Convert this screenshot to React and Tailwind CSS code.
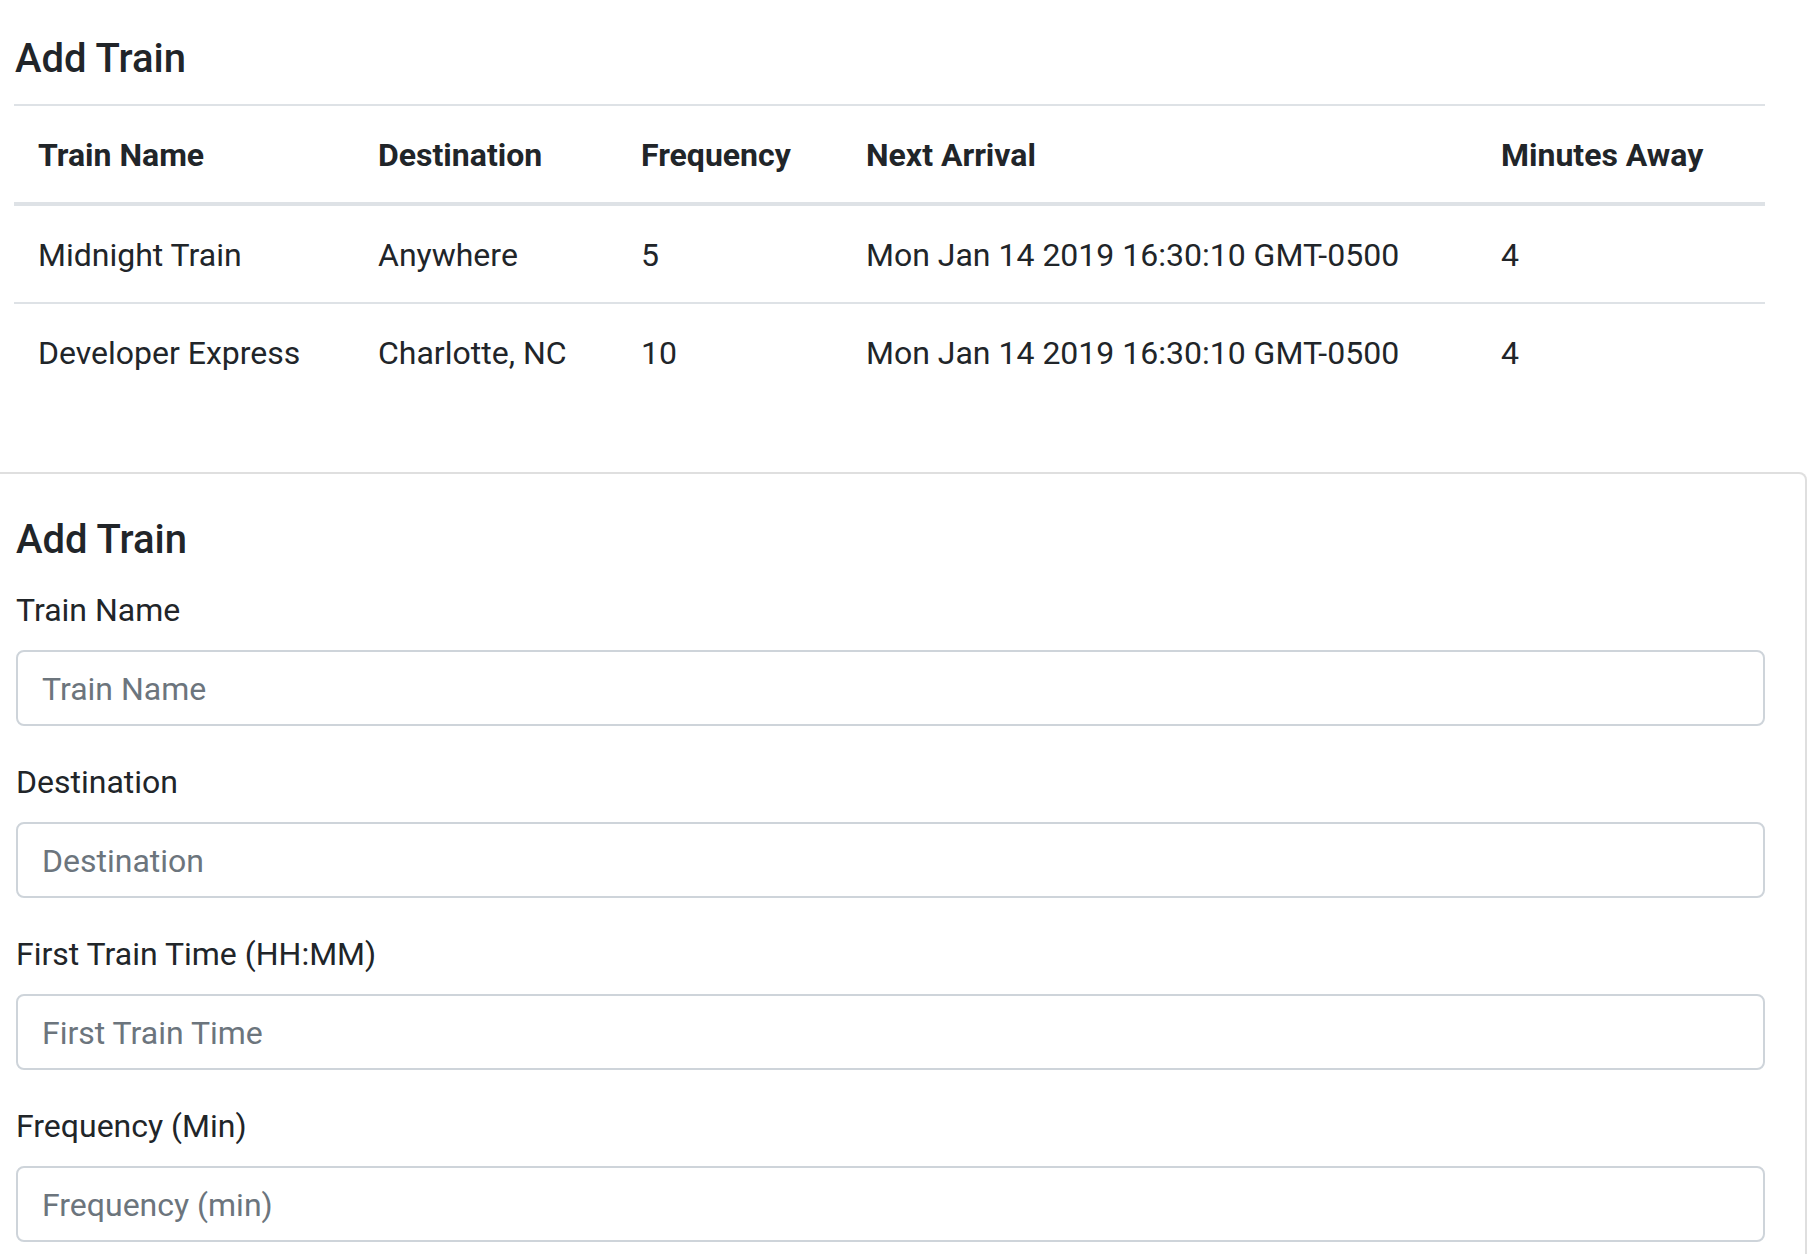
import React from "react";

const rows = [
  { name: "Midnight Train", dest: "Anywhere", freq: "5", next: "Mon Jan 14 2019 16:30:10 GMT-0500", away: "4" },
  { name: "Developer Express", dest: "Charlotte, NC", freq: "10", next: "Mon Jan 14 2019 16:30:10 GMT-0500", away: "4" },
];

const fields = [
  { label: "Train Name", placeholder: "Train Name" },
  { label: "Destination", placeholder: "Destination" },
  { label: "First Train Time (HH:MM)", placeholder: "First Train Time" },
  { label: "Frequency (Min)", placeholder: "Frequency (min)" },
];

export default function App() {
  return (
    <div className="h-screen overflow-hidden bg-white font-['Roboto','Helvetica_Neue',Arial,sans-serif] text-[32px] leading-[48px] text-[#212529]">
      <div className="ml-[14px] w-[1751px]">
        <h5 className="mt-[35px] mb-[21px] pl-[1px] text-[40px] leading-[48px] font-medium">Add Train</h5>
        <table className="w-full table-fixed border-collapse">
          <colgroup>
            <col className="w-[340px]" />
            <col className="w-[263px]" />
            <col className="w-[225px]" />
            <col className="w-[635px]" />
            <col className="w-[288px]" />
          </colgroup>
          <thead>
            <tr>
              {["Train Name", "Destination", "Frequency", "Next Arrival", "Minutes Away"].map((h) => (
                <th
                  key={h}
                  className="border-t-2 border-b-4 border-[#dee2e6] px-[24px] pt-[25px] pb-[23px] text-left align-bottom font-bold whitespace-nowrap"
                >
                  {h}
                </th>
              ))}
            </tr>
          </thead>
          <tbody>
            {rows.map((r) => (
              <tr key={r.name}>
                <td className="border-t-2 border-[#dee2e6] px-[24px] pt-[25px] pb-[23px] whitespace-nowrap">{r.name}</td>
                <td className="border-t-2 border-[#dee2e6] px-[24px] pt-[25px] pb-[23px] whitespace-nowrap">{r.dest}</td>
                <td className="border-t-2 border-[#dee2e6] px-[24px] pt-[25px] pb-[23px] whitespace-nowrap">{r.freq}</td>
                <td className="border-t-2 border-[#dee2e6] px-[24px] pt-[25px] pb-[23px] whitespace-nowrap">{r.next}</td>
                <td className="border-t-2 border-[#dee2e6] px-[24px] pt-[25px] pb-[23px] whitespace-nowrap">{r.away}</td>
              </tr>
            ))}
          </tbody>
        </table>
      </div>

      <div className="mt-[72px] ml-[-26px] w-[1833px] rounded-[8px] border-2 border-[rgba(0,0,0,0.125)] bg-white p-[40px]">
        <h5 className="mb-[22px] pt-[2px] text-[40px] leading-[48px] font-medium">Add Train</h5>
        <form>
          {fields.map((f) => (
            <div key={f.label} className="mb-[32px]">
              <label className="mb-[16px] block pt-[1px] leading-[47px]">{f.label}</label>
              <input
                type="text"
                placeholder={f.placeholder}
                className="block h-[76px] w-full rounded-[8px] border-2 border-[#ced4da] bg-white px-[24px] pt-[2px] text-[32px] leading-[48px] text-[#495057] placeholder:text-[#6c757d] outline-none"
              />
            </div>
          ))}
        </form>
      </div>
    </div>
  );
}
